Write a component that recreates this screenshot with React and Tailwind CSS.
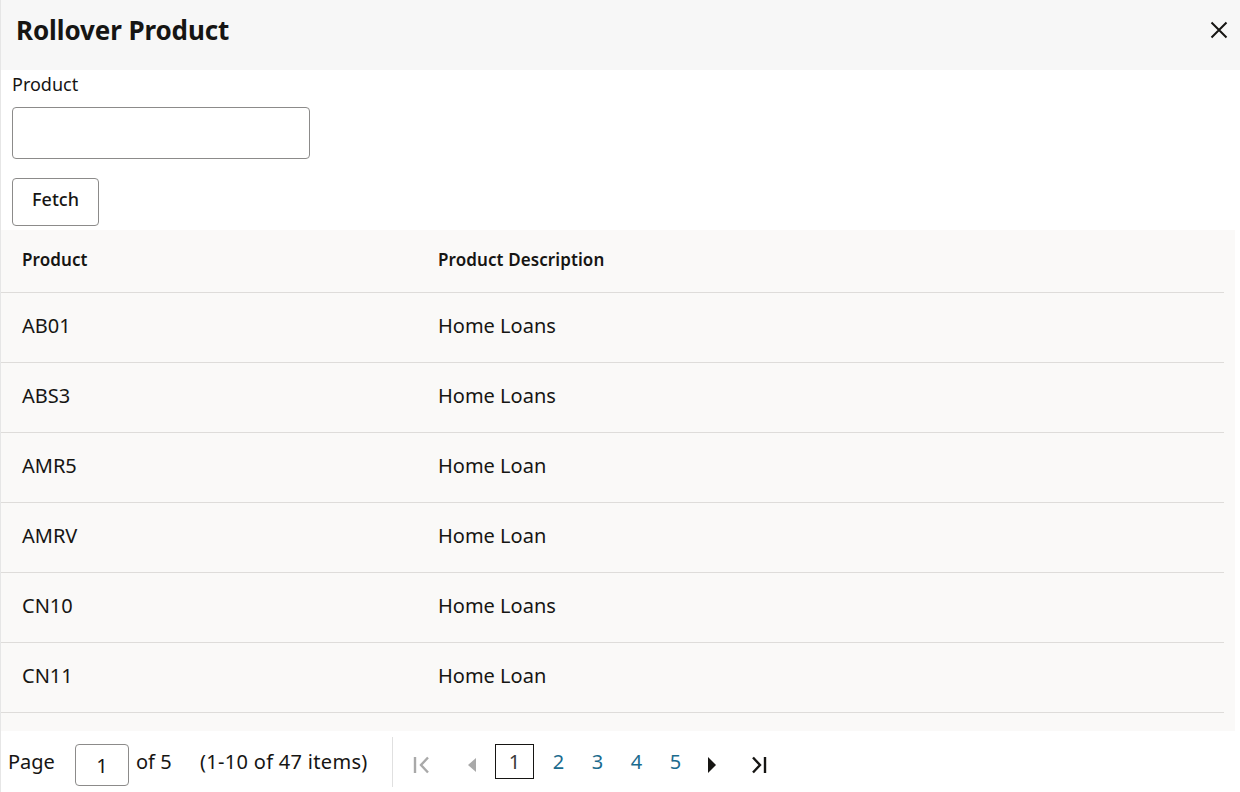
import React from "react";

const ROWS = [
  { code: "AB01", desc: "Home Loans" },
  { code: "ABS3", desc: "Home Loans" },
  { code: "AMR5", desc: "Home Loan" },
  { code: "AMRV", desc: "Home Loan" },
  { code: "CN10", desc: "Home Loans" },
  { code: "CN11", desc: "Home Loan" },
  { code: "CN12", desc: "Home Loans" },
  { code: "CN13", desc: "Home Loan" },
];

const CloseIcon = () => (
  <svg width="20" height="20" viewBox="0 0 20 20" fill="none" stroke="#161513" strokeWidth="2">
    <path d="M2.5 2.5 L17.5 17.5 M17.5 2.5 L2.5 17.5" />
  </svg>
);

const FirstIcon = () => (
  <svg width="20" height="18" viewBox="0 0 20 18" fill="none" stroke="#a9a9a9" strokeWidth="2.4">
    <path d="M3 1 V17" />
    <path d="M16 1.5 L9 9 L16 16.5" />
  </svg>
);

const LastIcon = () => (
  <svg width="20" height="18" viewBox="0 0 20 18" fill="none" stroke="#161513" strokeWidth="2.4">
    <path d="M4 1.5 L11 9 L4 16.5" />
    <path d="M16 1 V17" />
  </svg>
);

const App = () => {
  return (
    <div className="h-[792px] w-[1240px] overflow-hidden border-l border-[#e6e6e6] bg-white font-['Noto_Sans',sans-serif] text-[#161513]">
      <div className="flex h-[70px] items-center justify-between bg-[#f7f7f7] pb-[11px] pl-[15px] pr-[11px]">
        <h1 className="text-[26px] font-bold leading-none tracking-[-0.1px]">Rollover Product</h1>
        <button type="button" className="p-0">
          <CloseIcon />
        </button>
      </div>

      <div className="px-[11px]">
        <label className="block pt-[1px] text-[18px] leading-[26px]">Product</label>
        <input
          type="text"
          className="mt-[10px] block h-[52px] w-[298px] rounded-[4px] border border-[#8c8b8a] bg-white"
        />
        <button
          type="button"
          className="mt-[19px] h-[48px] w-[87px] rounded-[4px] border border-[#8c8b8a] bg-white pb-[5px] text-[18px] font-medium"
        >
          Fetch
        </button>
      </div>

      <div className="mt-[4px] h-[501px] w-[1234px] overflow-hidden bg-[#faf9f8]">
        <div className="mr-[11px]">
          <div className="grid h-[63px] grid-cols-[416px_1fr] items-center border-b border-[#dedcda] pb-[3px] pl-[21px] text-[17px] font-semibold tracking-[0.1px]">
            <span>Product</span>
            <span>Product Description</span>
          </div>
          {ROWS.map((row) => (
            <div
              key={row.code}
              className="grid h-[70px] grid-cols-[416px_1fr] items-center border-b border-[#dedcda] pb-[3px] pl-[21px] text-[20px]"
            >
              <span>{row.code}</span>
              <span>{row.desc}</span>
            </div>
          ))}
        </div>
      </div>

      <div className="flex h-[61px] items-center text-[20px] leading-[26px]">
        <div className="flex w-[391px] items-center">
          <span className="ml-[7px] w-[67px]">Page</span>
          <div className="mt-[7px] flex h-[42px] w-[54px] items-center justify-center rounded-[4px] border border-[#8c8b8a] pt-[2px] leading-none">
            1
          </div>
          <span className="ml-[7px] w-[64px]">of 5</span>
          <span className="tracking-[0.3px]">(1-10 of 47 items)</span>
        </div>
        <div className="h-[50px] w-px bg-[#e0e0e0]" />
        <div className="ml-[19px] mt-[6px]">
          <FirstIcon />
        </div>
        <svg className="ml-[35px] mt-[6px]" width="10" height="14" viewBox="0 0 10 14" fill="#a9a9a9">
          <path d="M9 0 L1 7 L9 14 Z" />
        </svg>
        <div className="ml-[18px] flex h-[35px] w-[39px] items-center justify-center border border-[#161513] leading-none text-[#3a3a3a]">
          1
        </div>
        <div className="ml-[5px] flex text-[#1b6b8e]">
          <span className="w-[39px] text-center">2</span>
          <span className="w-[39px] text-center">3</span>
          <span className="w-[39px] text-center">4</span>
          <span className="w-[39px] text-center">5</span>
        </div>
        <svg className="ml-[12px] mt-[6px]" width="10" height="16" viewBox="0 0 10 16" fill="#161513">
          <path d="M1 0 L9 8 L1 16 Z" />
        </svg>
        <div className="ml-[32px] mt-[6px]">
          <LastIcon />
        </div>
      </div>
    </div>
  );
};

export default App;
